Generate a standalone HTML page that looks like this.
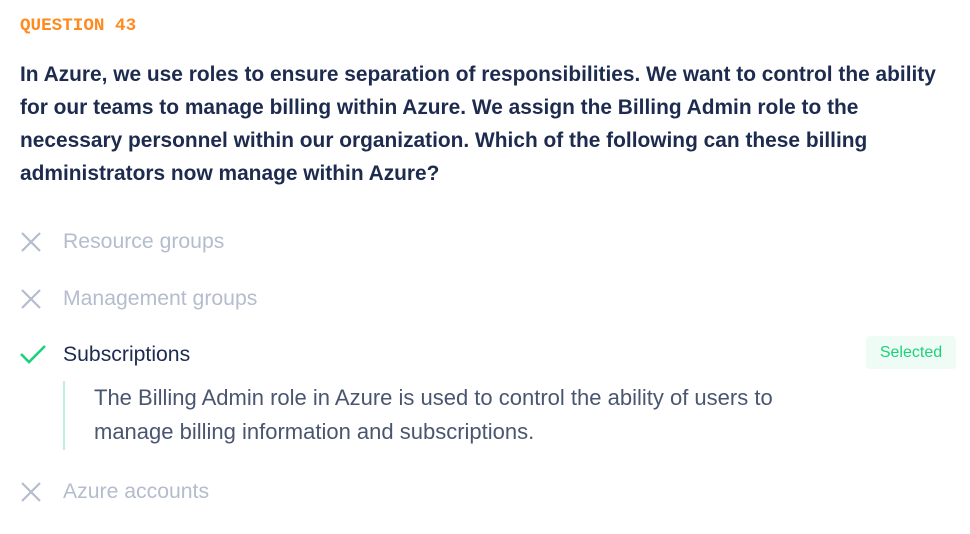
<!DOCTYPE html>
<html><head><style>
body{margin:0;background:#fff;width:970px;height:534px;overflow:hidden;font-family:"Liberation Sans",sans-serif;}
.q{position:absolute;left:20px;top:16px;font-family:"Liberation Mono",monospace;font-weight:bold;font-size:17.6px;color:#ff8a1f;}
.t{position:absolute;left:20px;top:58px;width:950px;font-size:20.9px;line-height:33px;font-weight:bold;color:#1d2b4f;white-space:nowrap;}
.o{position:absolute;left:63px;font-size:21.2px;line-height:24px;color:#b4bccd;white-space:nowrap;}
.ic{position:absolute;left:20px;}
.exp{position:absolute;left:63px;top:381px;height:69px;border-left:2px solid #bff0d8;padding-left:29px;font-size:22px;line-height:34px;color:#4a5670;width:800px;white-space:nowrap;}
.badge{position:absolute;left:866px;top:336px;width:90px;height:33px;background:#effbf5;border-radius:4px;color:#19d27c;font-size:16px;line-height:33px;text-align:center;}
</style></head><body>
<div class="q">QUESTION 43</div>
<div class="t">In Azure, we use roles to ensure separation of responsibilities. We want to control the ability<br>for our teams to manage billing within Azure. We assign the Billing Admin role to the<br>necessary personnel within our organization. Which of the following can these billing<br>administrators now manage within Azure?</div>

<svg class="ic" style="top:231px" width="22" height="22" viewBox="0 0 22 22"><path d="M2 2L20 20M20 2L2 20" stroke="#b4bccd" stroke-width="2.2"/></svg>
<div class="o" style="top:230px">Resource groups</div>

<svg class="ic" style="top:288px" width="22" height="22" viewBox="0 0 22 22"><path d="M2 2L20 20M20 2L2 20" stroke="#b4bccd" stroke-width="2.2"/></svg>
<div class="o" style="top:287px">Management groups</div>

<svg class="ic" style="top:343px" width="26" height="22" viewBox="0 0 26 22"><path d="M1 11L9 19L25 3" fill="none" stroke="#19d27c" stroke-width="2.6"/></svg>
<div class="o" style="top:343px;color:#1d2b4f">Subscriptions</div>
<div class="badge">Selected</div>
<div class="exp">The Billing Admin role in Azure is used to control the ability of users to<br>manage billing information and subscriptions.</div>

<svg class="ic" style="top:481px" width="22" height="22" viewBox="0 0 22 22"><path d="M2 2L20 20M20 2L2 20" stroke="#b4bccd" stroke-width="2.2"/></svg>
<div class="o" style="top:480px">Azure accounts</div>
</body></html>
